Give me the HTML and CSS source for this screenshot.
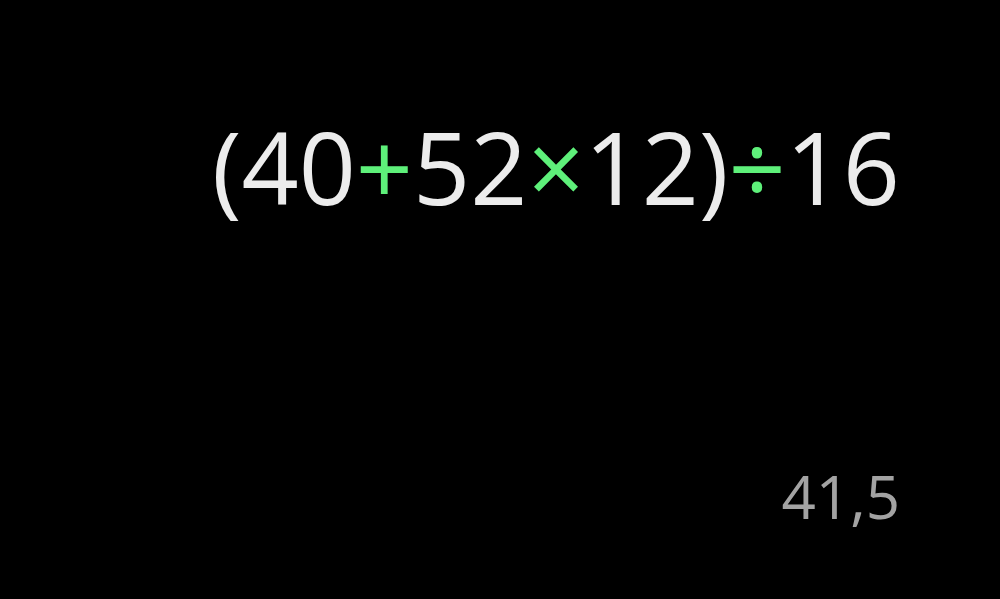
FILE: index.html
```html
<!DOCTYPE html>
<html>
<head>
<meta charset="utf-8">
<link rel="stylesheet" href="styles.css">
</head>
<body>
<div class="screen">
  <div class="expr">(40<span class="op">+</span>52<span class="op">×</span>12)<span class="op">÷</span>16</div>
  <div class="result">41,5</div>
</div>
</body>
</html>
```
FILE: styles.css
```css
html, body {
  margin: 0;
  padding: 0;
  background: #000;
}
.screen {
  width: 1000px;
  height: 599px;
  display: flex;
  flex-direction: column;
  align-items: flex-end;
  box-sizing: border-box;
  padding: 96px 100px 0 0;
  font-family: "Open Sans", sans-serif;
  overflow: hidden;
}
.expr {
  font-size: 100px;
  line-height: 140px;
  color: #ececec;
  white-space: nowrap;
}
.op {
  color: #5ef07a;
}
.result {
  margin-top: 220px;
  font-size: 60px;
  line-height: 80px;
  color: #a3a3a3;
}
```
